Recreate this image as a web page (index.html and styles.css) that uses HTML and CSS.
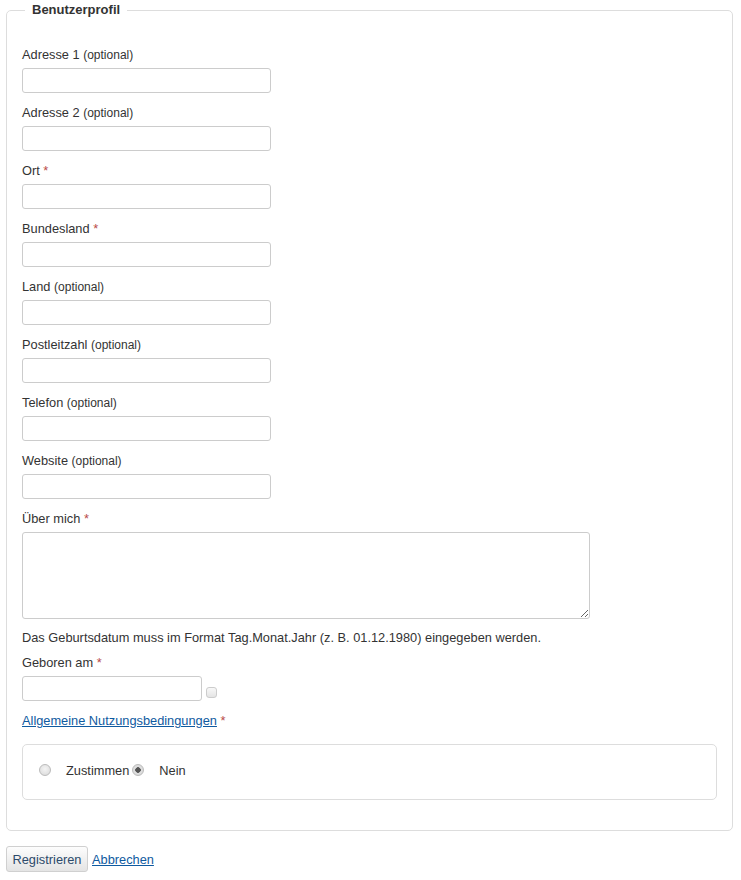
FILE: index.html
```html
<!DOCTYPE html>
<html lang="de">
<head>
<meta charset="utf-8">
<title>Benutzerprofil</title>
<link rel="stylesheet" href="styles.css">
</head>
<body>
<form class="page">
  <fieldset class="profile">
    <legend class="legend">Benutzerprofil</legend>

    <div class="group">
      <label class="label">Adresse 1 <span class="opt">(optional)</span></label>
      <input class="field" type="text">
    </div>
    <div class="group">
      <label class="label">Adresse 2 <span class="opt">(optional)</span></label>
      <input class="field" type="text">
    </div>
    <div class="group">
      <label class="label">Ort <span class="req">*</span></label>
      <input class="field" type="text">
    </div>
    <div class="group">
      <label class="label">Bundesland <span class="req">*</span></label>
      <input class="field" type="text">
    </div>
    <div class="group">
      <label class="label">Land <span class="opt">(optional)</span></label>
      <input class="field" type="text">
    </div>
    <div class="group">
      <label class="label">Postleitzahl <span class="opt">(optional)</span></label>
      <input class="field" type="text">
    </div>
    <div class="group">
      <label class="label">Telefon <span class="opt">(optional)</span></label>
      <input class="field" type="text">
    </div>
    <div class="group">
      <label class="label">Website <span class="opt">(optional)</span></label>
      <input class="field" type="text">
    </div>
    <div class="group group-area">
      <label class="label">Über mich <span class="req">*</span></label>
      <textarea class="area"></textarea>
    </div>

    <p class="help">Das Geburtsdatum muss im Format Tag.Monat.Jahr (z. B. 01.12.1980) eingegeben werden.</p>
    <div class="group">
      <label class="label">Geboren am <span class="req">*</span></label>
      <div class="date-row">
        <input class="field date" type="text">
        <span class="cal-btn"></span>
      </div>
    </div>

    <div class="terms-line">
      <a class="link" href="#">Allgemeine Nutzungsbedingungen</a> <span class="req">*</span>
    </div>
    <div class="terms-box">
      <input class="radio" type="radio" name="tos" id="tos1">
      <label class="radio-label" for="tos1">Zustimmen</label>
      <input class="radio" type="radio" name="tos" id="tos0" checked>
      <label class="radio-label" for="tos0">Nein</label>
    </div>
  </fieldset>

  <div class="actions">
    <button class="btn" type="button">Registrieren</button>
    <a class="link" href="#">Abbrechen</a>
  </div>
</form>
</body>
</html>
```

FILE: styles.css
```css
html, body {
  margin: 0;
  padding: 0;
  background: #fff;
}
body {
  font-family: "Liberation Sans", Arial, sans-serif;
  font-size: 12.8px;
  color: #333;
}
.page {
  padding: 2px 8px 0 6px;
}
.profile {
  margin: 0;
  padding: 28px 15px 30px 15px;
  border: 1px solid #ddd;
  border-radius: 5px;
  min-width: 0;
}
.legend {
  font-weight: bold;
  font-size: 13px;
  padding: 0 7px;
  margin-left: 3px;
  line-height: 16px;
  color: #333;
}
.group {
  display: flex;
  flex-direction: column;
  align-items: flex-start;
  margin-bottom: 11px;
}
.label {
  display: block;
  line-height: 18px;
  height: 18px;
  margin-bottom: 4px;
}
.opt {
  font-size: 12px;
}
.req {
  color: #b94a48;
}
.field {
  box-sizing: border-box;
  width: 249px;
  height: 25px;
  margin: 0;
  padding: 3px 6px;
  border: 1px solid #ccc;
  border-radius: 3px;
  background: #fff;
  font: inherit;
}
.area {
  box-sizing: border-box;
  width: 568px;
  height: 87px;
  margin: 0;
  padding: 4px 6px;
  border: 1px solid #ccc;
  border-radius: 3px;
  font: inherit;
}
.group-area {
  margin-bottom: 10px;
}
.help {
  margin: 0 0 7px 0;
  line-height: 18px;
}
.date-row {
  display: flex;
  align-items: flex-end;
}
.date {
  width: 180px;
}
.cal-btn {
  display: block;
  width: 9px;
  height: 9px;
  margin: 0 0 3px 4px;
  border: 1px solid #ccc;
  border-radius: 3px;
  background: linear-gradient(#f8f8f8, #e4e4e4);
}
.terms-line {
  line-height: 18px;
  margin-bottom: 14px;
}
.link {
  color: #0f5aa0;
  text-decoration: underline;
}
.terms-box {
  display: flex;
  align-items: center;
  box-sizing: border-box;
  height: 56px;
  padding: 0 14px 3px 14px;
  border: 1px solid #ddd;
  border-radius: 5px;
}
.radio {
  appearance: none;
  -webkit-appearance: none;
  box-sizing: border-box;
  width: 12px;
  height: 12px;
  margin: 0 15px 2px 2px;
  border: 1px solid #bbb;
  border-radius: 50%;
  background: radial-gradient(circle at 50% 40%, #f4f4f4, #d8d8d8);
}
.radio:checked {
  background: radial-gradient(circle, #555 0, #555 2.5px, #e0e0e0 3px, #d4d4d4 100%);
}
.radio-label {
  line-height: 18px;
  margin-right: 1px;
}
.actions {
  display: flex;
  align-items: center;
  gap: 4px;
  margin-top: 15px;
}
.btn {
  box-sizing: border-box;
  height: 26px;
  width: 82px;
  padding: 0 4px;
  border: 1px solid #d0d0d0;
  border-radius: 3px;
  background: linear-gradient(#fdfdfd, #e4e4e4);
  color: #2c4a6a;
  font: inherit;
}
```
